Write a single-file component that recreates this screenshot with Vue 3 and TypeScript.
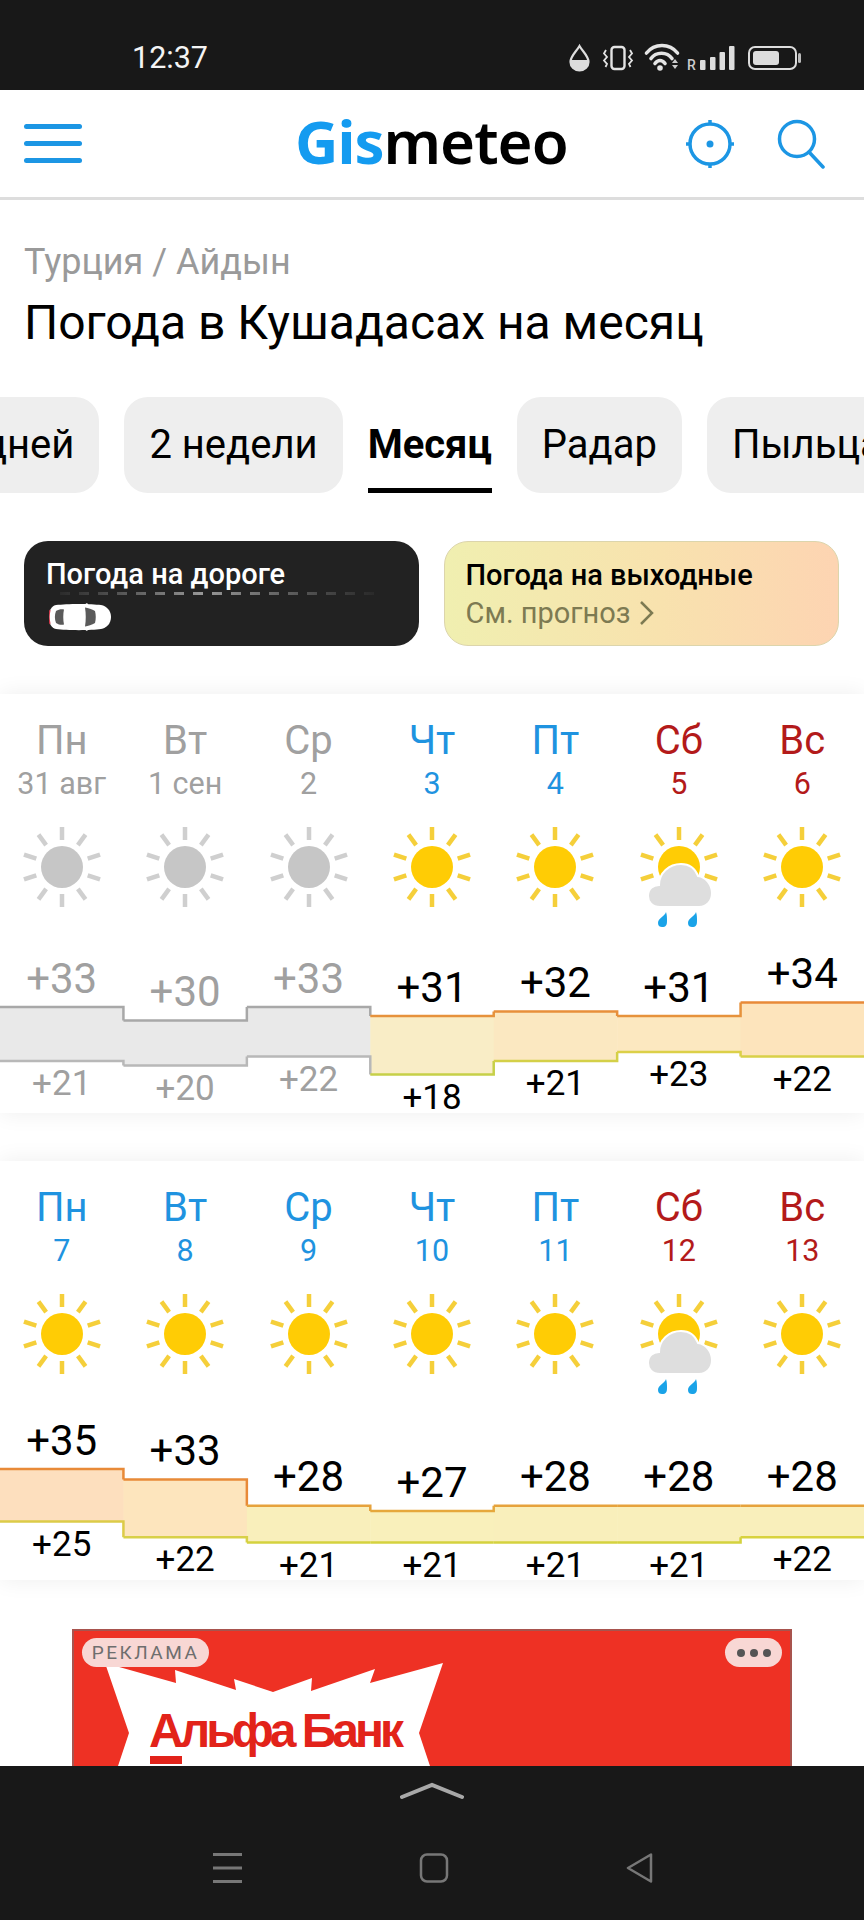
<script setup lang="ts">
interface Day {
  name: string
  date: string
  tone: 'past' | 'work' | 'rest'
  hi: number
  lo: number
  rain?: boolean
  fill: string
  hiLine: string
  loLine: string
}

const grey = { fill: '#e9e9e9', hiLine: '#a8a8a8', loLine: '#b8b8b8' }

const weekOne: Day[] = [
  { name: 'Пн', date: '31 авг', tone: 'past', hi: 33, lo: 21, ...grey },
  { name: 'Вт', date: '1 сен', tone: 'past', hi: 30, lo: 20, ...grey },
  { name: 'Ср', date: '2', tone: 'past', hi: 33, lo: 22, ...grey },
  { name: 'Чт', date: '3', tone: 'work', hi: 31, lo: 18, fill: '#f9edc6', hiLine: '#e6923c', loLine: '#c6d048' },
  { name: 'Пт', date: '4', tone: 'work', hi: 32, lo: 21, fill: '#fbe8c1', hiLine: '#e88f3a', loLine: '#d4d048' },
  { name: 'Сб', date: '5', tone: 'rest', hi: 31, lo: 23, rain: true, fill: '#fce8c0', hiLine: '#e6923c', loLine: '#dcd048' },
  { name: 'Вс', date: '6', tone: 'rest', hi: 34, lo: 22, fill: '#fde4bc', hiLine: '#e88a38', loLine: '#d8d048' }
]

const weekTwo: Day[] = [
  { name: 'Пн', date: '7', tone: 'work', hi: 35, lo: 25, fill: '#fddfbe', hiLine: '#e88a38', loLine: '#dccb48' },
  { name: 'Вт', date: '8', tone: 'work', hi: 33, lo: 22, fill: '#fde5bd', hiLine: '#e88a38', loLine: '#d8d048' },
  { name: 'Ср', date: '9', tone: 'work', hi: 28, lo: 21, fill: '#f9efbb', hiLine: '#e6a23c', loLine: '#d4d23e' },
  { name: 'Чт', date: '10', tone: 'work', hi: 27, lo: 21, fill: '#f9f0bb', hiLine: '#e6a83c', loLine: '#d4d23e' },
  { name: 'Пт', date: '11', tone: 'work', hi: 28, lo: 21, fill: '#f9efbb', hiLine: '#e6a23c', loLine: '#d4d23e' },
  { name: 'Сб', date: '12', tone: 'rest', hi: 28, lo: 21, rain: true, fill: '#f9efbb', hiLine: '#e6a23c', loLine: '#d4d23e' },
  { name: 'Вс', date: '13', tone: 'rest', hi: 28, lo: 22, fill: '#f9efbb', hiLine: '#e6a23c', loLine: '#d8d23e' }
]

const COL = 864 / 7

// y(t) maps a temperature to its height in the 163px tall chart
const weeks = [
  { key: 'a', days: weekOne, y: (t: number) => 66 + (31 - t) * 4.5 },
  { key: 'b', days: weekTwo, y: (t: number) => 52 + (35 - t) * 5.25 }
]

function band(d: Day, i: number, y: (t: number) => number) {
  return { x: i * COL, top: y(d.hi), h: y(d.lo) - y(d.hi) }
}

function edge(days: Day[], i: number, t: (d: Day) => number, y: (t: number) => number) {
  const x0 = i * COL
  const x1 = (i + 1) * COL
  const here = y(t(days[i]))
  const next = i < days.length - 1 ? y(t(days[i + 1])) : here
  return `M${x0} ${here}L${x1} ${here}L${x1} ${next}`
}

const allRays = [0, 36, 72, 108, 144, 180, 216, 252, 288, 324]
const rainRays = [0, 36, 72, 108, 252, 288, 324]
const burst =
  '33,34 104,54 103,41 164,61 162,50 201,63 240,49 239,62 303,40 298,54 371,34 347,104 358,137 46,137 57,104'
</script>

<template>
  <div class="phone">
    <div class="status">
      <span class="time">12:37</span>
      <svg class="status-icons" viewBox="569 42 234 30" width="234" height="30">
        <path d="M579.5 46C576 52 570.5 56 570.5 62a9 8.500 0 0 0 18 0C588.500 56 583 52 579.500 46Z" fill="none" stroke="#ddd" stroke-width="2.200" />
        <path d="M570.500 60h18v2a9 8.500 0 0 1-18 0Z" fill="#ddd" />
        <rect x="611.500" y="47" width="13" height="22" rx="3" fill="none" stroke="#e4e4e4" stroke-width="2.400" />
        <path d="M606 50l-2 3.500 3 3.500-3 3.500 3 3.500-1.500 3M630 50l2 3.500-3 3.500 3 3.500-3 3.500 1.500 3" fill="none" stroke="#e4e4e4" stroke-width="1.800" />
        <path d="M646.500 53C654.500 43 669.500 43 677.500 53M651 58.500C656 51.500 667 51.500 672 58.500M655 63.500C658 59.500 662 59.500 665 63.500" fill="none" stroke="#e4e4e4" stroke-width="3.600" stroke-linecap="round" />
        <circle cx="660" cy="68" r="2.800" fill="#e4e4e4" />
        <path d="M672 63l3-4 3 4ZM672 65l3 4 3-4Z" fill="#ccc" />
        <text x="687" y="70" class="roam">R</text>
        <rect x="700" y="60" width="5.500" height="10" rx="1" fill="#ddd" />
        <rect x="710" y="57" width="5.500" height="13" rx="1" fill="#ddd" />
        <rect x="719.500" y="52" width="5.500" height="18" rx="1" fill="#ddd" />
        <rect x="729" y="46" width="5.500" height="24" rx="1" fill="#ddd" />
        <rect x="749" y="47" width="47" height="22" rx="6" fill="none" stroke="#ddd" stroke-width="2" />
        <rect x="753" y="51" width="26" height="14" rx="3" fill="#ddd" />
        <rect x="798" y="53" width="3" height="10" rx="1.500" fill="#bbb" />
      </svg>
    </div>

    <header class="top">
      <div class="burger"><i></i><i></i><i></i></div>
      <div class="logo"><b>Gis</b>meteo</div>
      <div class="top-actions">
        <svg width="48" height="50" viewBox="0 0 48 50" fill="none" stroke="#1c96e4" stroke-width="3.500">
          <circle cx="24" cy="25" r="20" />
          <path d="M24 1v5M24 44v5M0 25h5M43 25h5" />
          <circle cx="24" cy="25" r="3.500" fill="#1c96e4" stroke="none" />
        </svg>
        <svg width="48" height="50" viewBox="0 0 48 50" fill="none" stroke="#1c96e4" stroke-width="3.500" stroke-linecap="round">
          <circle cx="20" cy="20" r="17.500" />
          <path d="M32 33l14 15" />
        </svg>
      </div>
    </header>

    <main class="page">
      <div class="crumbs">Турция / Айдын</div>
      <h1 class="title">Погода в Кушадасах на месяц</h1>

      <nav class="tabs">
        <span class="tab">10 дней</span>
        <span class="tab">2 недели</span>
        <span class="tab active">Месяц</span>
        <span class="tab">Радар</span>
        <span class="tab">Пыльца</span>
      </nav>

      <section class="promos">
        <div class="promo road">
          <div class="promo-title">Погода на дороге</div>
          <svg class="dashes" width="320" height="3" viewBox="0 0 320 3">
            <defs>
              <linearGradient id="dashFade">
                <stop offset="0" stop-color="#888" stop-opacity="0.1" />
                <stop offset="0.45" stop-color="#999" />
                <stop offset="1" stop-color="#888" stop-opacity="0.05" />
              </linearGradient>
            </defs>
            <rect width="320" height="3" fill="url(#dashFade)" class="dash-rect" />
          </svg>
          <svg class="car" width="62" height="30" viewBox="0 0 62 30">
            <path d="M38 1l2 2.500h-6ZM38 29l2-2.500h-6Z" fill="#fff" />
            <path d="M7 3C18 1.500 42 1.500 52 3C58 4 62 9 62 15C62 21 58 26 52 27C42 28.500 18 28.500 7 27C2 26 0 21 0 15C0 9 2 4 7 3Z" fill="#fff" />
            <path d="M1 8C0 12 0 18 1 22" stroke="#d0384a" stroke-width="1.200" fill="none" />
            <path d="M7 9C10 7 13 7 15 7.500C14 12 14 18 15 22.500C13 23 10 23 7 21C5.500 17 5.500 13 7 9Z" fill="#5a5a5a" />
            <path d="M36 5.500C39 6 43 7 46 9C47 13 47 17 46 21C43 23 39 24 36 24.500C37 18 37 12 36 5.500Z" fill="#5a5a5a" />
          </svg>
        </div>
        <div class="promo weekend">
          <div class="promo-title">Погода на выходные</div>
          <div class="promo-sub">
            См. прогноз
            <svg width="15" height="24" viewBox="0 0 15 24" fill="none" stroke="#7d7a52" stroke-width="2.500"><path d="M2 1l11 11L2 23" /></svg>
          </div>
        </div>
      </section>

      <section v-for="w in weeks" :key="w.key" class="week">
        <div class="heads">
          <div v-for="d in w.days" :key="d.name" class="head" :class="d.tone">
            <div class="day">{{ d.name }}</div>
            <div class="date">{{ d.date }}</div>
            <svg class="wx" :class="{ dim: d.tone === 'past' }" viewBox="-48 -48 96 116" width="96" height="116">
              <line
                v-for="a in d.rain ? rainRays : allRays"
                :key="a"
                class="ray"
                x1="0"
                y1="-27"
                x2="0"
                y2="-40"
                :transform="`rotate(${a})`"
              />
              <circle class="disc" r="21" />
              <template v-if="d.rain">
                <path class="cloud" d="M-19 40C-27 40-31 35-31 29C-31 22-26 18-20 18C-20 6-10-3 2-3C10-3 16 1 19 9C27 10 33 18 33 26C33 34 28 40 20 40Z" />
                <path class="drop" d="M-13 45C-14 49-21 51-21 56C-21 59-19 60-17 60C-13 60-12 58-12 54C-12 51-12 48-13 45Z" />
                <path class="drop" d="M17 45C16 49 9 51 9 56C9 59 11 60 13 60C17 60 18 58 18 54C18 51 18 48 17 45Z" />
              </template>
            </svg>
          </div>
        </div>
        <div class="chart">
          <svg class="bands" width="864" height="163" viewBox="0 0 864 163">
            <rect
              v-for="(d, i) in w.days"
              :key="'f' + i"
              :x="band(d, i, w.y).x"
              :y="band(d, i, w.y).top"
              :width="COL + 0.5"
              :height="band(d, i, w.y).h"
              :fill="d.fill"
            />
            <path v-for="(d, i) in w.days" :key="'l' + i" :d="edge(w.days, i, (x) => x.lo, w.y)" :stroke="d.loLine" class="edge" />
            <path v-for="(d, i) in w.days" :key="'h' + i" :d="edge(w.days, i, (x) => x.hi, w.y)" :stroke="d.hiLine" class="edge" />
          </svg>
          <div class="temps">
            <div v-for="(d, i) in w.days" :key="i" class="temp-col" :class="{ muted: d.tone === 'past' }">
              <span class="hi" :style="{ top: w.y(d.hi) - 28.5 + 'px' }">+{{ d.hi }}</span>
              <span class="lo" :style="{ top: w.y(d.lo) + 23 + 'px' }">+{{ d.lo }}</span>
            </div>
          </div>
        </div>
      </section>

      <section class="ad">
        <svg class="ad-art" width="720" height="137" viewBox="0 0 720 137">
          <polygon :points="burst" fill="#fff" />
          <rect x="78" y="127" width="32" height="8" fill="#e2231a" />
        </svg>
        <span class="ad-brand">Альфа Банк</span>
        <span class="ad-label">РЕКЛАМА</span>
        <span class="ad-more"><i></i><i></i><i></i></span>
      </section>
    </main>

    <footer class="nav">
      <svg class="nav-up" width="64" height="18" viewBox="0 0 64 18" fill="none" stroke="#a8a8a8" stroke-width="4" stroke-linecap="round"><path d="M2 15L32 3l30 12" /></svg>
      <div class="nav-keys">
        <svg width="30" height="30" viewBox="0 0 30 30" stroke="#777" stroke-width="3"><path d="M0 1.500h29M0 15h29M0 28.500h29" /></svg>
        <svg width="30" height="30" viewBox="0 0 30 30" fill="none" stroke="#777" stroke-width="2.500"><rect x="2" y="1.500" width="26" height="27" rx="6" /></svg>
        <svg width="30" height="30" viewBox="0 0 30 30" fill="none" stroke="#777" stroke-width="2.500" stroke-linejoin="round"><path d="M26 1.500v27L3 15Z" /></svg>
      </div>
    </footer>
  </div>
</template>

<style scoped>
.phone {
  width: 864px;
  height: 1920px;
  display: flex;
  flex-direction: column;
  overflow: hidden;
  background: #fff;
  font-family: Roboto, "Liberation Sans", sans-serif;
  color: #000;
}

.status {
  height: 90px;
  flex: none;
  box-sizing: border-box;
  padding: 42px 61px 0 132px;
  background: #181818;
  display: flex;
  justify-content: space-between;
  align-items: flex-start;
}
.time {
  color: #f4f4f4;
  font-size: 30.500px;
  line-height: 32px;
}
.status-icons {
  display: block;
}
.roam {
  fill: #ccc;
  font: 500 14px Roboto, sans-serif;
}

.top {
  height: 110px;
  flex: none;
  box-sizing: border-box;
  display: flex;
  align-items: center;
  padding: 0 39px 0 24px;
  border-bottom: 3px solid #ddd;
}
.burger {
  width: 58px;
  display: flex;
  flex-direction: column;
  gap: 12px;
}
.burger i {
  display: block;
  height: 5px;
  border-radius: 3px;
  background: #1c96e4;
}
.logo {
  margin: -6px 0 0 213px;
  font: 600 60px/64px "Noto Sans", sans-serif;
  letter-spacing: -1px;
  color: #000;
}
.logo b {
  font-weight: 700;
  color: #149bf0;
}
.top-actions {
  margin-left: auto;
  display: flex;
  gap: 43px;
}

.page {
  flex: 1;
  min-height: 0;
  overflow: hidden;
}

.crumbs {
  margin: 42px 24px 0;
  font-size: 36px;
  line-height: 40px;
  color: #9a9a9a;
}
.title {
  margin: 13px 24px 0;
  font-size: 48px;
  line-height: 56px;
  font-weight: 400;
  white-space: nowrap;
}

.tabs {
  display: flex;
  gap: 25px;
  margin: 46px 0 0 -97px;
  width: 1200px;
}
.tab {
  flex: none;
  box-sizing: border-box;
  height: 96px;
  padding: 0 25px;
  border-radius: 24px;
  background: #eee;
  font-size: 40px;
  line-height: 96px;
  white-space: nowrap;
}
.tab.active {
  padding: 0;
  background: none;
  border-radius: 0;
  font-weight: 700;
  border-bottom: 5px solid #000;
}

.promos {
  display: flex;
  gap: 25px;
  margin: 48px 25px 0 24px;
}
.promo {
  flex: 1;
  height: 105px;
  box-sizing: border-box;
  border-radius: 24px;
}
.promo-title {
  font-size: 29px;
  line-height: 32px;
  font-weight: 500;
}
.road {
  background: #222;
  color: #fff;
  padding: 17px 0 0 22px;
}
.dashes {
  display: block;
  margin: 2px 0 0 14px;
}
.dash-rect {
  mask: repeating-linear-gradient(90deg, #000 0 10px, transparent 10px 19px);
}
.car {
  display: block;
  margin: 7px 0 0 3px;
}
.weekend {
  padding: 17px 0 0 21px;
  border: 1px solid #dcd5ac;
  background: linear-gradient(90deg, #f0efb0, #f8e2ae 55%, #fdd4b2);
}
.promo-sub {
  display: flex;
  align-items: center;
  gap: 9px;
  margin-top: 5px;
  font-size: 29px;
  line-height: 34px;
  color: #7d7a52;
}

.week {
  margin-top: 48px;
  height: 419px;
  background: #fff;
  box-shadow: 0 0 22px rgba(0, 0, 0, 0.07);
}
.heads {
  display: grid;
  grid-template-columns: repeat(7, 1fr);
  padding-top: 22px;
}
.head {
  display: flex;
  flex-direction: column;
  align-items: center;
}
.day {
  font-size: 40px;
  line-height: 50px;
}
.date {
  font-size: 30.500px;
  line-height: 36px;
  white-space: nowrap;
}
.head.past {
  color: #a0a0a0;
}
.head.work {
  color: #1f93e0;
}
.head.rest {
  color: #b31a1a;
}
.wx {
  display: block;
  margin: 17px 0 15px;
}
.ray {
  stroke: #f5cf3a;
  stroke-width: 4.500;
}
.disc {
  fill: #ffcc05;
}
.wx.dim .ray {
  stroke: #cfcfcf;
}
.wx.dim .disc {
  fill: #c6c6c6;
}
.cloud {
  fill: #dedede;
  stroke: #fff;
  stroke-width: 2;
}
.drop {
  fill: #1aa3e8;
}

.chart {
  position: relative;
  height: 163px;
}
.bands {
  display: block;
}
.edge {
  fill: none;
  stroke-width: 2.500;
}
.temps {
  position: absolute;
  inset: 0;
  display: grid;
  grid-template-columns: repeat(7, 1fr);
}
.temp-col {
  position: relative;
  color: #000;
}
.temp-col.muted {
  color: #a0a0a0;
}
.hi,
.lo {
  position: absolute;
  left: 0;
  right: 0;
  text-align: center;
  transform: translateY(-50%);
}
.hi {
  font-size: 42px;
  line-height: 44px;
}
.lo {
  font-size: 35px;
  line-height: 38px;
}

.ad {
  position: relative;
  margin: 49px 72px 0;
  height: 160px;
  background: #ee3124;
  box-shadow: inset 0 2px 0 #a8544e, inset 2px 0 0 #a8544e, inset -2px 0 0 #a8544e;
  overflow: hidden;
}
.ad-art {
  position: absolute;
  left: 0;
  top: 0;
}
.ad-brand {
  position: absolute;
  left: 77px;
  top: 74px;
  font: 700 48px/56px "Liberation Sans", sans-serif;
  letter-spacing: -4px;
  color: #e2231a;
  white-space: nowrap;
}
.ad-label {
  position: absolute;
  left: 10px;
  top: 9px;
  width: 127px;
  height: 29px;
  border-radius: 15px;
  background: #f8d7d4;
  color: #6e6e6e;
  font-size: 19px;
  line-height: 29px;
  letter-spacing: 2.500px;
  text-align: center;
}
.ad-more {
  position: absolute;
  right: 10px;
  top: 9px;
  width: 57px;
  height: 29px;
  border-radius: 15px;
  background: #f8d7d4;
  display: flex;
  align-items: center;
  justify-content: center;
  gap: 5px;
}
.ad-more i {
  width: 8px;
  height: 8px;
  border-radius: 50%;
  background: #555;
}

.nav {
  height: 154px;
  flex: none;
  box-sizing: border-box;
  background: #181818;
  display: flex;
  flex-direction: column;
  align-items: center;
  padding-top: 16px;
}
.nav-up {
  display: block;
}
.nav-keys {
  display: flex;
  gap: 176px;
  margin: 53px 0 0 3px;
}
</style>

<style>
html,
body {
  margin: 0;
  background: #fff;
}
</style>
